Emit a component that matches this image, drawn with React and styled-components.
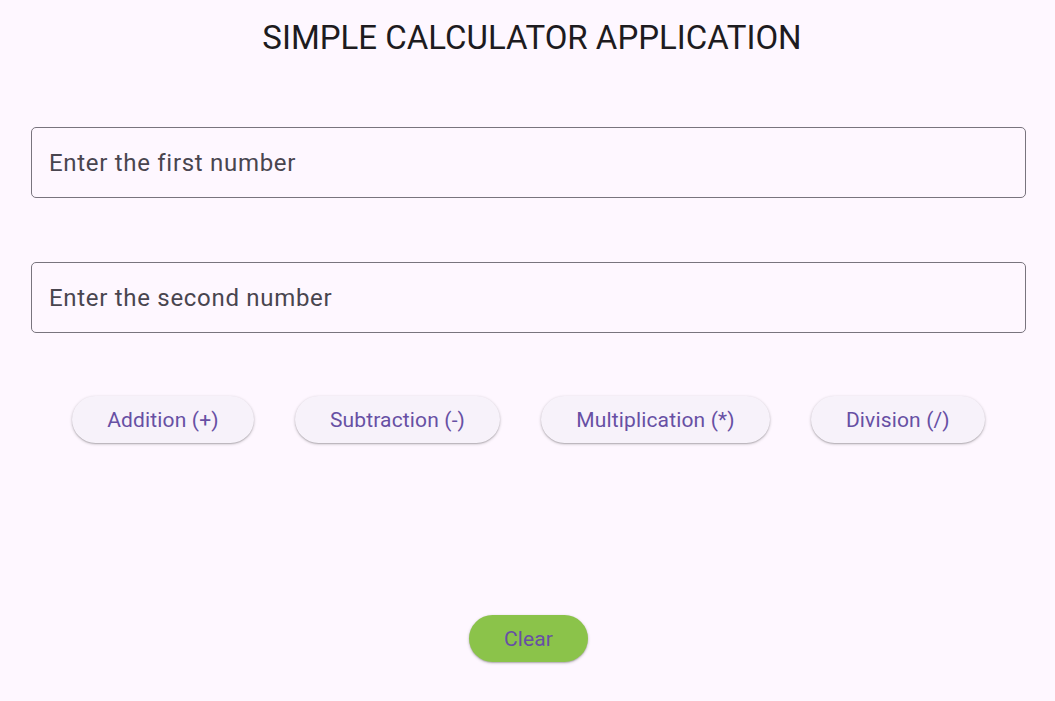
import React from "react"
import styled, { createGlobalStyle } from "styled-components"

const GlobalStyle = createGlobalStyle`
  html, body {
    margin: 0;
    padding: 0;
    background: #fef7ff;
    font-family: Roboto, "Liberation Sans", sans-serif;
  }
`

const Page = styled.div`
  width: 1055px;
  height: 701px;
  box-sizing: border-box;
  padding: 0 29px 0 31px;
  display: flex;
  flex-direction: column;
  background: #fef7ff;
`

const Title = styled.h1`
  margin: 19px 0 0;
  padding-left: 7px;
  text-align: center;
  font-size: 33px;
  font-weight: 400;
  line-height: 38px;
  color: #1d1b20;
`

const Field = styled.div`
  margin-top: ${p => p.$top}px;
  height: 71px;
  box-sizing: border-box;
  border: 1px solid #79747e;
  border-radius: 5px;
  display: flex;
  align-items: center;
  padding-left: 15px;

  input {
    appearance: none;
    border: none;
    background: none;
    outline: none;
    width: 100%;
    font-family: Roboto, "Liberation Sans", sans-serif;
    font-size: 24px;
    letter-spacing: 0.7px;
    color: #49454f;
  }

  input::placeholder {
    color: #49454f;
  }
`

const OpRow = styled.div`
  margin-top: 63px;
  display: flex;
  justify-content: space-evenly;
`

const Pill = styled.button`
  appearance: none;
  border: none;
  height: 47px;
  padding: 0 ${p => p.$pad}px;
  border-radius: 24px;
  background: ${p => p.$bg};
  color: #6750a4;
  font-family: Roboto, "Liberation Sans", sans-serif;
  font-size: 21px;
  font-weight: 400;
  letter-spacing: 0.15px;
  box-shadow: 0 1px 3px rgba(0, 0, 0, 0.25), 0 1px 1px rgba(0, 0, 0, 0.12);
  cursor: pointer;
`

const Footer = styled.div`
  margin-top: auto;
  margin-bottom: 39px;
  display: flex;
  justify-content: center;
`

const ops = ["Addition (+)", "Subtraction (-)", "Multiplication (*)", "Division (/)"]

const App = () => {
  return (
    <>
      <GlobalStyle />
      <Page>
        <Title>SIMPLE CALCULATOR APPLICATION</Title>
        <Field $top={70}>
          <input type="text" placeholder="Enter the first number" />
        </Field>
        <Field $top={64}>
          <input type="text" placeholder="Enter the second number" />
        </Field>
        <OpRow>
          {ops.map(op => (
            <Pill key={op} $bg="#f7f2fa" $pad={35}>{op}</Pill>
          ))}
        </OpRow>
        <Footer>
          <Pill $bg="#8bc34a" $pad={35}>Clear</Pill>
        </Footer>
      </Page>
    </>
  )
}

export default App
